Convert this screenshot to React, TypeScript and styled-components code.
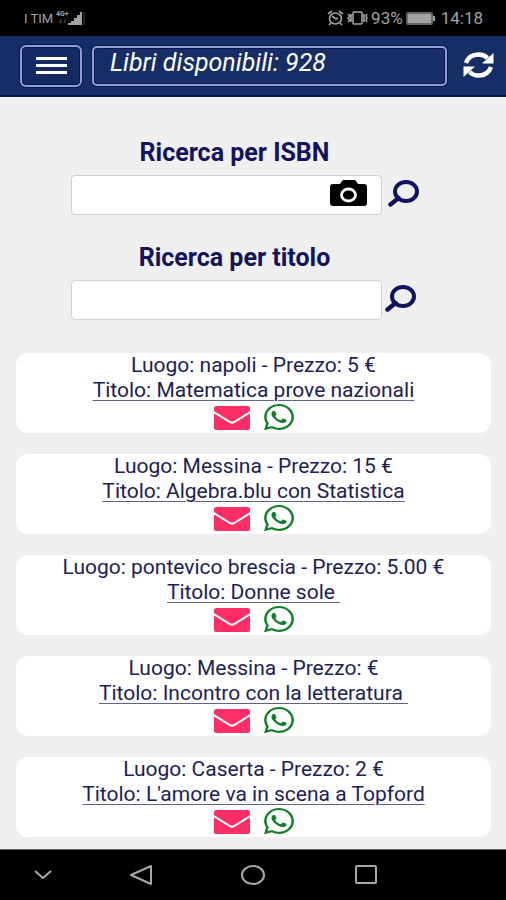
import React from "react";
import styled, { createGlobalStyle } from "styled-components";
import { FaWhatsapp } from "react-icons/fa";

const GlobalStyle = createGlobalStyle`
  *, *::before, *::after { box-sizing: border-box; }
  body { margin: 0; background: #efefef; font-family: Roboto, "Liberation Sans", sans-serif; }
  button, input { font: inherit; }
`;

const Screen = styled.div`
  display: flex;
  flex-direction: column;
  min-height: 100vh;
  background: #efefef;
  color: #1b2158;
`;

const StatusBar = styled.div`
  display: flex;
  justify-content: space-between;
  align-items: center;
  height: 36px;
  padding: 0 23px 0 24px;
  background: #000;
  color: #a2a2a2;
  font-size: 17px;
`;

const StatusGroup = styled.div`
  display: flex;
  align-items: center;
  gap: 3px;
`;

const Carrier = styled.span`
  font-size: 13px;
`;

const Clock = styled.span`
  margin-left: 2px;
`;

const Header = styled.header`
  display: flex;
  align-items: center;
  gap: 10px;
  height: 61px;
  padding: 0 12px 0 20px;
  background: #172d65;
  border-bottom: 2px solid #0b1457;
`;

const MenuButton = styled.button`
  display: flex;
  flex-direction: column;
  justify-content: center;
  align-items: center;
  gap: 4px;
  width: 62px;
  height: 42px;
  padding: 0;
  background: #132a63;
  border: 2px solid #8e9fd0;
  border-radius: 6px;
  box-shadow: 0 0 0 1px #0a1558, inset 0 0 0 1px #0a1558;
`;

const MenuLine = styled.span`
  width: 31px;
  height: 3px;
  background: #fff;
`;

const Available = styled.div`
  flex: 1;
  height: 40px;
  padding-left: 16px;
  border: 2px solid #8e9fd0;
  border-radius: 5px;
  box-shadow: 0 0 0 1px #0a1558, inset 0 0 0 1px #0a1558;
  color: #fff;
  font-size: 25px;
  font-style: italic;
  line-height: 30px;
  white-space: nowrap;
`;

const IconButton = styled.button`
  display: flex;
  padding: 0;
  border: 0;
  background: none;
  color: inherit;
  cursor: pointer;
`;

const RefreshButton = styled(IconButton)`
  margin-left: 6px;
  padding-bottom: 2px;
  color: #fff;
`;

const Main = styled.main`
  flex: 1;
  padding: 41px 15px 12px 16px;
`;

const SearchForm = styled.form`
  padding: 0 71px 0 55px;
  margin-bottom: 28px;
`;

const SearchLabel = styled.label`
  display: block;
  padding-right: 22px;
  margin-bottom: 7px;
  color: #13145c;
  font-size: 25px;
  font-weight: 700;
  line-height: 30px;
  text-align: center;
  white-space: nowrap;
`;

const SearchRow = styled.div`
  display: grid;
  grid-template-columns: minmax(0, 1fr) 38px;
  align-items: center;
`;

const Field = styled.div`
  display: flex;
  align-items: center;
  height: 40px;
  padding: 0 14px 4px 0;
  background: #fff;
  border: 1px solid #cfcfcf;
  border-radius: 4px;
`;

const TextInput = styled.input`
  flex: 1;
  min-width: 0;
  height: 100%;
  padding: 0 10px;
  border: 0;
  background: transparent;
  outline: none;
  font-size: 20px;
`;

const SearchButton = styled(IconButton)<{ $side: "start" | "end" }>`
  justify-self: ${(p) => p.$side};
  padding: 0 0 4px ${(p) => (p.$side === "start" ? "3px" : "0")};
  color: #10135f;
`;

const BookList = styled.ul`
  display: grid;
  gap: 21px;
  margin: 0;
  padding: 5px 0 0;
  list-style: none;
`;

const BookCard = styled.li`
  display: flex;
  flex-direction: column;
  align-items: center;
  height: 80px;
  background: #fff;
  border-radius: 12px;
  font-size: 21px;
  line-height: 25px;
  white-space: pre;
`;

const TitleLink = styled.a`
  color: inherit;
  text-decoration: underline;
  text-decoration-color: #5d6484;
  text-decoration-thickness: 1px;
  text-underline-offset: 3px;
`;

const Contacts = styled.div`
  display: flex;
  align-items: center;
  gap: 14px;
  height: 28px;
`;

const MailLink = styled.a`
  display: flex;
  padding-top: 2px;
  color: #ff2d65;
`;

const ChatLink = styled.a`
  display: flex;
  color: #12802a;
  svg { width: 30px; height: 30px; }
`;

const NavBar = styled.nav`
  display: grid;
  grid-template-columns: 85px 1fr 1fr 1fr 84px;
  align-items: center;
  justify-items: center;
  height: 51px;
  background: #000;
  border-top: 1px solid #666;
  color: #a8a8a8;
`;

const SignalIcon = () => (
  <svg width="30" height="16" viewBox="0 0 30 16" fill="currentColor">
    <text x="0" y="6" fontSize="7" fontWeight="700">4G+</text>
    <path d="M5 9v4M3 11l2 2M9 13V9" stroke="#555" fill="none" />
    <path d="M12 15v-2h3v-2h3V8h3V5h3V2h2v13z" />
    <path d="M28 2v13" stroke="#444" />
  </svg>
);

const AlarmIcon = () => (
  <svg width="17" height="16" viewBox="0 0 17 16" fill="none" stroke="currentColor" strokeWidth="1.6">
    <ellipse cx="8.5" cy="8.5" rx="6" ry="5.5" />
    <path d="M5 6l4 3 2-1M1 4l4-3M12 1l4 3M4 13l-2 2M13 13l2 2" />
  </svg>
);

const VibrateIcon = () => (
  <svg width="21" height="16" viewBox="0 0 21 16" fill="none" stroke="currentColor" strokeWidth="1.6">
    <rect x="6" y="2" width="9" height="12" rx="1" />
    <path d="M1 4l2 2-2 2 2 2-2 2M4 4v8M17 4v8M20 4l-1 2 1 2-1 2 1 2" />
  </svg>
);

const BatteryIcon = () => (
  <svg width="30" height="13" viewBox="0 0 30 13">
    <rect x="1" y="1" width="25" height="11" rx="1" fill="#a2a2a2" stroke="#666" strokeWidth="2" />
    <path d="M28 4v5" stroke="#a2a2a2" strokeWidth="2" />
  </svg>
);

const RefreshIcon = () => (
  <svg width="31" height="26" viewBox="0 0 31 26" fill="currentColor">
    <path d="M3 11C5 5 10 2.500 15.500 2.500c4.500 0 7 1.500 9 3.500" fill="none" stroke="currentColor" strokeWidth="4.400" />
    <path d="M30.500 1v10.500H19z" />
    <path d="M28 15c-2 6-7 8.500-12.500 8.500-4.500 0-7-1.500-9-3.500" fill="none" stroke="currentColor" strokeWidth="4.400" />
    <path d="M.5 25V14.500H12z" />
  </svg>
);

const CameraIcon = () => (
  <svg width="37" height="27" viewBox="0 0 37 27">
    <path fill="#000" d="M3 4h7l2-3q.6-1 2-1h10q1.4 0 2 1l2 3h6q3 0 3 3v16q0 3-3 3H3q-3 0-3-3V7q0-3 3-3z" />
    <ellipse cx="18.5" cy="15" rx="7" ry="6" fill="#000" stroke="#fff" strokeWidth="2.8" />
  </svg>
);

const SearchIcon = () => (
  <svg width="32" height="28" viewBox="0 0 32 28" fill="none" stroke="currentColor">
    <ellipse cx="18" cy="12.500" rx="11" ry="9.500" strokeWidth="4" />
    <path d="M10.5 19L2.5 25.500" strokeWidth="4.4" strokeLinecap="round" />
  </svg>
);

const MailIcon = () => (
  <svg width="36" height="24" viewBox="0 0 36 24" fill="currentColor">
    <path d="M2.5 0h31Q36 0 36 2.5V5L20 15q-2 1.2-4 0L0 5V2.5Q0 0 2.5 0z" />
    <path d="M0 7.5L15.5 17q2.5 1.5 5 0L36 7.5V22q0 2-2 2H2q-2 0-2-2z" />
  </svg>
);

const books = [
  { place: "napoli", price: "5 ", title: "Matematica prove nazionali" },
  { place: "Messina", price: "15 ", title: "Algebra.blu con Statistica" },
  { place: "pontevico brescia", price: "5.00 ", title: "Donne sole " },
  { place: "Messina", price: "", title: "Incontro con la letteratura " },
  { place: "Caserta", price: "2 ", title: "L'amore va in scena a Topford" },
];

type SearchProps = { id: string; label: string; side: "start" | "end"; children?: React.ReactNode };

const Search = ({ id, label, side, children }: SearchProps) => (
  <SearchForm onSubmit={(e) => e.preventDefault()}>
    <SearchLabel htmlFor={id}>{label}</SearchLabel>
    <SearchRow>
      <Field>
        <TextInput id={id} type="text" />
        {children}
      </Field>
      <SearchButton $side={side} type="submit" aria-label="Cerca">
        <SearchIcon />
      </SearchButton>
    </SearchRow>
  </SearchForm>
);

export default function App() {
  return (
    <Screen>
      <GlobalStyle />
      <StatusBar>
        <StatusGroup>
          <Carrier>I TIM</Carrier>
          <SignalIcon />
        </StatusGroup>
        <StatusGroup>
          <AlarmIcon />
          <VibrateIcon />
          <span>93%</span>
          <BatteryIcon />
          <Clock>14:18</Clock>
        </StatusGroup>
      </StatusBar>
      <Header>
        <MenuButton type="button" aria-label="Menu">
          <MenuLine />
          <MenuLine />
          <MenuLine />
        </MenuButton>
        <Available>Libri disponibili: 928</Available>
        <RefreshButton type="button" aria-label="Aggiorna">
          <RefreshIcon />
        </RefreshButton>
      </Header>
      <Main>
        <Search id="isbn" label="Ricerca per ISBN" side="end">
          <IconButton type="button" aria-label="Fotocamera">
            <CameraIcon />
          </IconButton>
        </Search>
        <Search id="titolo" label="Ricerca per titolo" side="start" />
        <BookList>
          {books.map((b) => (
            <BookCard key={b.title}>
              <span>{`Luogo: ${b.place} - Prezzo: ${b.price}€`}</span>
              <TitleLink href="#libro">{`Titolo: ${b.title}`}</TitleLink>
              <Contacts>
                <MailLink href="#email" aria-label="Email">
                  <MailIcon />
                </MailLink>
                <ChatLink href="#whatsapp" aria-label="WhatsApp">
                  <FaWhatsapp preserveAspectRatio="none" />
                </ChatLink>
              </Contacts>
            </BookCard>
          ))}
        </BookList>
      </Main>
      <NavBar>
        <IconButton type="button" aria-label="Nascondi">
          <svg width="20" height="12" viewBox="0 0 20 12" fill="none" stroke="currentColor" strokeWidth="2">
            <path d="M2 2l8 7 8-7" />
          </svg>
        </IconButton>
        <IconButton type="button" aria-label="Indietro">
          <svg width="24" height="22" viewBox="0 0 24 22" fill="none" stroke="currentColor" strokeWidth="2" strokeLinejoin="round">
            <path d="M22 2v18L2 11z" />
          </svg>
        </IconButton>
        <IconButton type="button" aria-label="Home">
          <svg width="26" height="22" viewBox="0 0 26 22" fill="none" stroke="currentColor" strokeWidth="2">
            <ellipse cx="13" cy="11" rx="11" ry="9" />
          </svg>
        </IconButton>
        <IconButton type="button" aria-label="Recenti">
          <svg width="24" height="22" viewBox="0 0 24 22" fill="none" stroke="currentColor" strokeWidth="2">
            <rect x="2" y="2" width="20" height="17" rx="1" />
          </svg>
        </IconButton>
      </NavBar>
    </Screen>
  );
}
